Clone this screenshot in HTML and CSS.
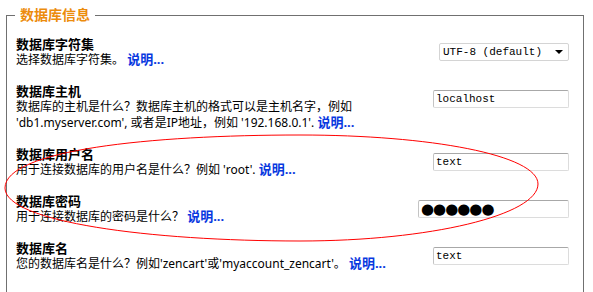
FILE: index.html
```html
<!DOCTYPE html>
<html>
<head>
  <meta charset="utf-8" />
  <title>数据库信息</title>
  <link rel="stylesheet" href="styles.css">
</head>
<body>
  <div class="page">
    <fieldset class="panel">
      <legend>数据库信息</legend>

      <div class="row">
        <div class="info">
          <div class="label">数据库字符集</div>
          <div class="desc">选择数据库字符集。 <a class="help" href="#">说明...</a></div>
        </div>
        <div class="control">
          <span class="select">UTF-8 (default)</span>
        </div>
      </div>

      <div class="row">
        <div class="info">
          <div class="label">数据库主机</div>
          <div class="desc">数据库的主机是什么？数据库主机的格式可以是主机名字，例如 'db1.myserver.com', 或者是IP地址，例如 '192.168.0.1'. <a class="help" href="#">说明...</a></div>
        </div>
        <div class="control">
          <input class="field" type="text" value="localhost">
        </div>
      </div>

      <div class="row">
        <div class="info">
          <div class="label">数据库用户名</div>
          <div class="desc">用于连接数据库的用户名是什么？例如 'root'. <a class="help" href="#">说明...</a></div>
        </div>
        <div class="control">
          <input class="field" type="text" value="text">
        </div>
      </div>

      <div class="row">
        <div class="info">
          <div class="label">数据库密码</div>
          <div class="desc">用于连接数据库的密码是什么？ <a class="help" href="#">说明...</a></div>
        </div>
        <div class="control">
          <input class="field secret" type="text" value="●●●●●●">
        </div>
      </div>

      <div class="row">
        <div class="info">
          <div class="label">数据库名</div>
          <div class="desc">您的数据库名是什么？例如'zencart'或'myaccount_zencart'。 <a class="help" href="#">说明...</a></div>
        </div>
        <div class="control">
          <input class="field" type="text" value="text">
        </div>
      </div>
    </fieldset>

    <!-- hand-drawn review mark over the user / password rows -->
    <svg class="mark" width="593" height="292" viewBox="0 0 593 292">
      <path d="M 5 188 C 5 150, 150 135, 300 135 C 430 135, 538 155, 538 184 C 538 215, 430 241, 300 241 C 150 241, 5 222, 5 188 Z" fill="none" stroke="#ff0000" stroke-width="1"/>
    </svg>
  </div>
</body>
</html>
```

FILE: styles.css
```css
html, body {
  margin: 0;
  padding: 0;
  background: #ffffff;
}

body {
  font-family: "Noto Sans", "Noto Sans CJK SC", sans-serif;
  font-size: 12px;
  color: #000000;
}

.page {
  position: relative;
  padding: 7px 9px 0 6px;
  height: 285px;
  overflow: hidden;
}

.panel {
  margin: 0;
  border: 1px solid #707070;
  padding: 13px 14px 20px 9px;
  min-width: 0;
}

.panel legend {
  padding: 0 5px;
  margin-left: -1px;
  color: #ec8c0c;
  font-size: 14px;
  font-weight: bold;
  line-height: 16px;
}

.row {
  display: flex;
  align-items: flex-start;
  margin-bottom: 15px;
}

.info {
  flex: 1;
  min-width: 0;
  padding-right: 12px;
  line-height: 16px;
}

.label {
  font-size: 13px;
  font-weight: bold;
  height: 16px;
}

.desc {
  font-size: 12px;
}

.help {
  color: #0838e0;
  font-size: 13px;
  line-height: 12px;
  font-weight: bold;
  text-decoration: none;
}

.control {
  margin-top: 7px;
  display: flex;
  justify-content: flex-end;
}

.field {
  box-sizing: border-box;
  width: 136px;
  height: 18px;
  margin: 0;
  padding: 0 2px;
  border: 1px solid #dcdcdc;
  border-top-color: #a8a8a8;
  border-left-color: #c4c4c4;
  border-radius: 2px;
  font-family: "Liberation Mono", monospace;
  font-size: 11px;
  color: #000000;
  background: #ffffff;
  outline: none;
}

.field.secret {
  width: 151px;
  padding: 0 2px;
  font-family: "DejaVu Sans", sans-serif;
  font-size: 15px;
  letter-spacing: -1px;
}

.select {
  position: relative;
  display: block;
  box-sizing: border-box;
  width: 130px;
  height: 18px;
  padding: 0 0 0 3px;
  border: 1px solid #d4d4d4;
  border-radius: 2px;
  font-family: "Liberation Mono", monospace;
  font-size: 11px;
  line-height: 16px;
}

.select::after {
  content: "";
  position: absolute;
  right: 5px;
  top: 6px;
  border-left: 4px solid transparent;
  border-right: 4px solid transparent;
  border-top: 4px solid #000000;
}

.mark {
  position: absolute;
  left: 0;
  top: 0;
  pointer-events: none;
}
```
